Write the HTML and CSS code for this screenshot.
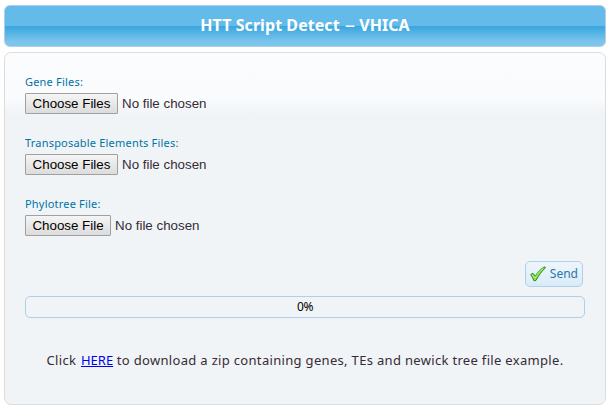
FILE: index.html
```html
<!DOCTYPE html>
<html lang="en">
<head>
<meta charset="utf-8">
<title>HTT Script Detect – VHICA</title>
<link rel="stylesheet" href="styles.css">
</head>
<body>
<header class="title-bar"><h1>HTT Script Detect <span class="dash">–</span> VHICA</h1></header>
<main class="panel">
  <form>
    <div class="field">
      <label class="label-gene">Gene Files:</label>
      <div class="picker"><button type="button" class="choose">Choose Files</button><span>No file chosen</span></div>
    </div>
    <div class="field">
      <label class="label-te">Transposable Elements Files:</label>
      <div class="picker"><button type="button" class="choose">Choose Files</button><span>No file chosen</span></div>
    </div>
    <div class="field">
      <label class="label-tree">Phylotree File:</label>
      <div class="picker"><button type="button" class="choose single">Choose File</button><span>No file chosen</span></div>
    </div>
    <div class="actions">
      <button type="button" class="send">
        <svg width="16" height="16" viewBox="0 0 16 16"><path d="M.7 8.600 3 7.200l2.200 3.100C7.500 6.500 10.700 2.900 14.800.8l.8.9C11.700 5.100 8.700 9.300 6 14.400l-2 .4C3.200 12.600 2 10.400.7 8.600z" fill="#83dc45" stroke="#2f8b24" stroke-width="1"/><path d="M2.200 8.700 5 12.200C7.300 8 9.800 5 13.200 2.500" fill="none" stroke="#c0f57d" stroke-width=".9"/></svg>
        <span>Send</span>
      </button>
    </div>
  </form>
  <div class="progress">0%</div>
  <p class="note">Click <a href="#">HERE</a> to download a zip containing genes, TEs and newick tree file example.</p>
</main>
</body>
</html>
```
FILE: styles.css
```css
* { box-sizing: border-box; }
body {
  margin: 0;
  padding: 5px 7px 0 4px;
  background: #fff;
  color: #362b36;
  font-family: "Noto Sans", sans-serif;
}
.title-bar {
  height: 42px;
  border: 1px solid #aed0ea;
  border-radius: 6px;
  background: linear-gradient(#64bae9 0 50%, #38a6df 50%, #7cc5ec 90%);
  display: flex;
  align-items: center;
  justify-content: center;
}
h1 {
  margin: 0 0 2px;
  color: #fff;
  font-size: 16px;
  line-height: 22px;
  font-weight: 700;
  letter-spacing: .06px;
  white-space: nowrap;
}
.dash {
  display: inline-block;
  margin: 0 1px 0 2px;
  font-weight: 600;
  transform: scaleX(1.25);
}
.panel {
  height: 353px;
  margin-top: 5px;
  padding: 21px 20px 0;
  border: 1px solid #ddd;
  border-radius: 7px;
  background: linear-gradient(#fbfcfe 0, #f9fbfd 46px, #f0f4f7 62px);
}
.field { height: 61px; }
.field label {
  display: block;
  height: 19px;
  color: #0073a5;
  font-size: 11px;
  line-height: 16px;
  letter-spacing: .2px;
}
.picker {
  display: flex;
  align-items: center;
  gap: 4px;
  height: 21px;
  font: 13.333px "Liberation Sans", sans-serif;
}
.choose {
  width: 93px;
  height: 21px;
  padding: 0;
  border: 1px solid #a0a0a0;
  border-radius: 1px;
  background: linear-gradient(#f5f5f5, #dcdcdc);
  color: #000;
  font: 13.333px "Liberation Sans", sans-serif;
}
.choose.single { width: 86px; }
.actions {
  display: flex;
  justify-content: flex-end;
  padding: 4px 2px 0 0;
}
.send {
  width: 58px;
  height: 26px;
  padding: 0 4px;
  border: 1px solid #aed0ea;
  border-radius: 5px;
  background: linear-gradient(#eff6fb, #d9ebf8);
  color: #2779aa;
  display: flex;
  align-items: center;
  justify-content: space-between;
  font: 12px "Noto Sans", sans-serif;
}
.send span { margin-top: -1px; }
.progress {
  height: 22px;
  margin-top: 9px;
  border: 1px solid #aed0ea;
  border-radius: 5px;
  color: #000;
  font-size: 12px;
  line-height: 20px;
  letter-spacing: -.5px;
  text-align: center;
}
.note {
  margin: 32px 0 0;
  font-size: 13px;
  line-height: 20px;
  letter-spacing: .32px;
  text-align: center;
  white-space: nowrap;
}
.note a {
  color: #00e;
  letter-spacing: 0;
  margin-left: 1px;
}
```
